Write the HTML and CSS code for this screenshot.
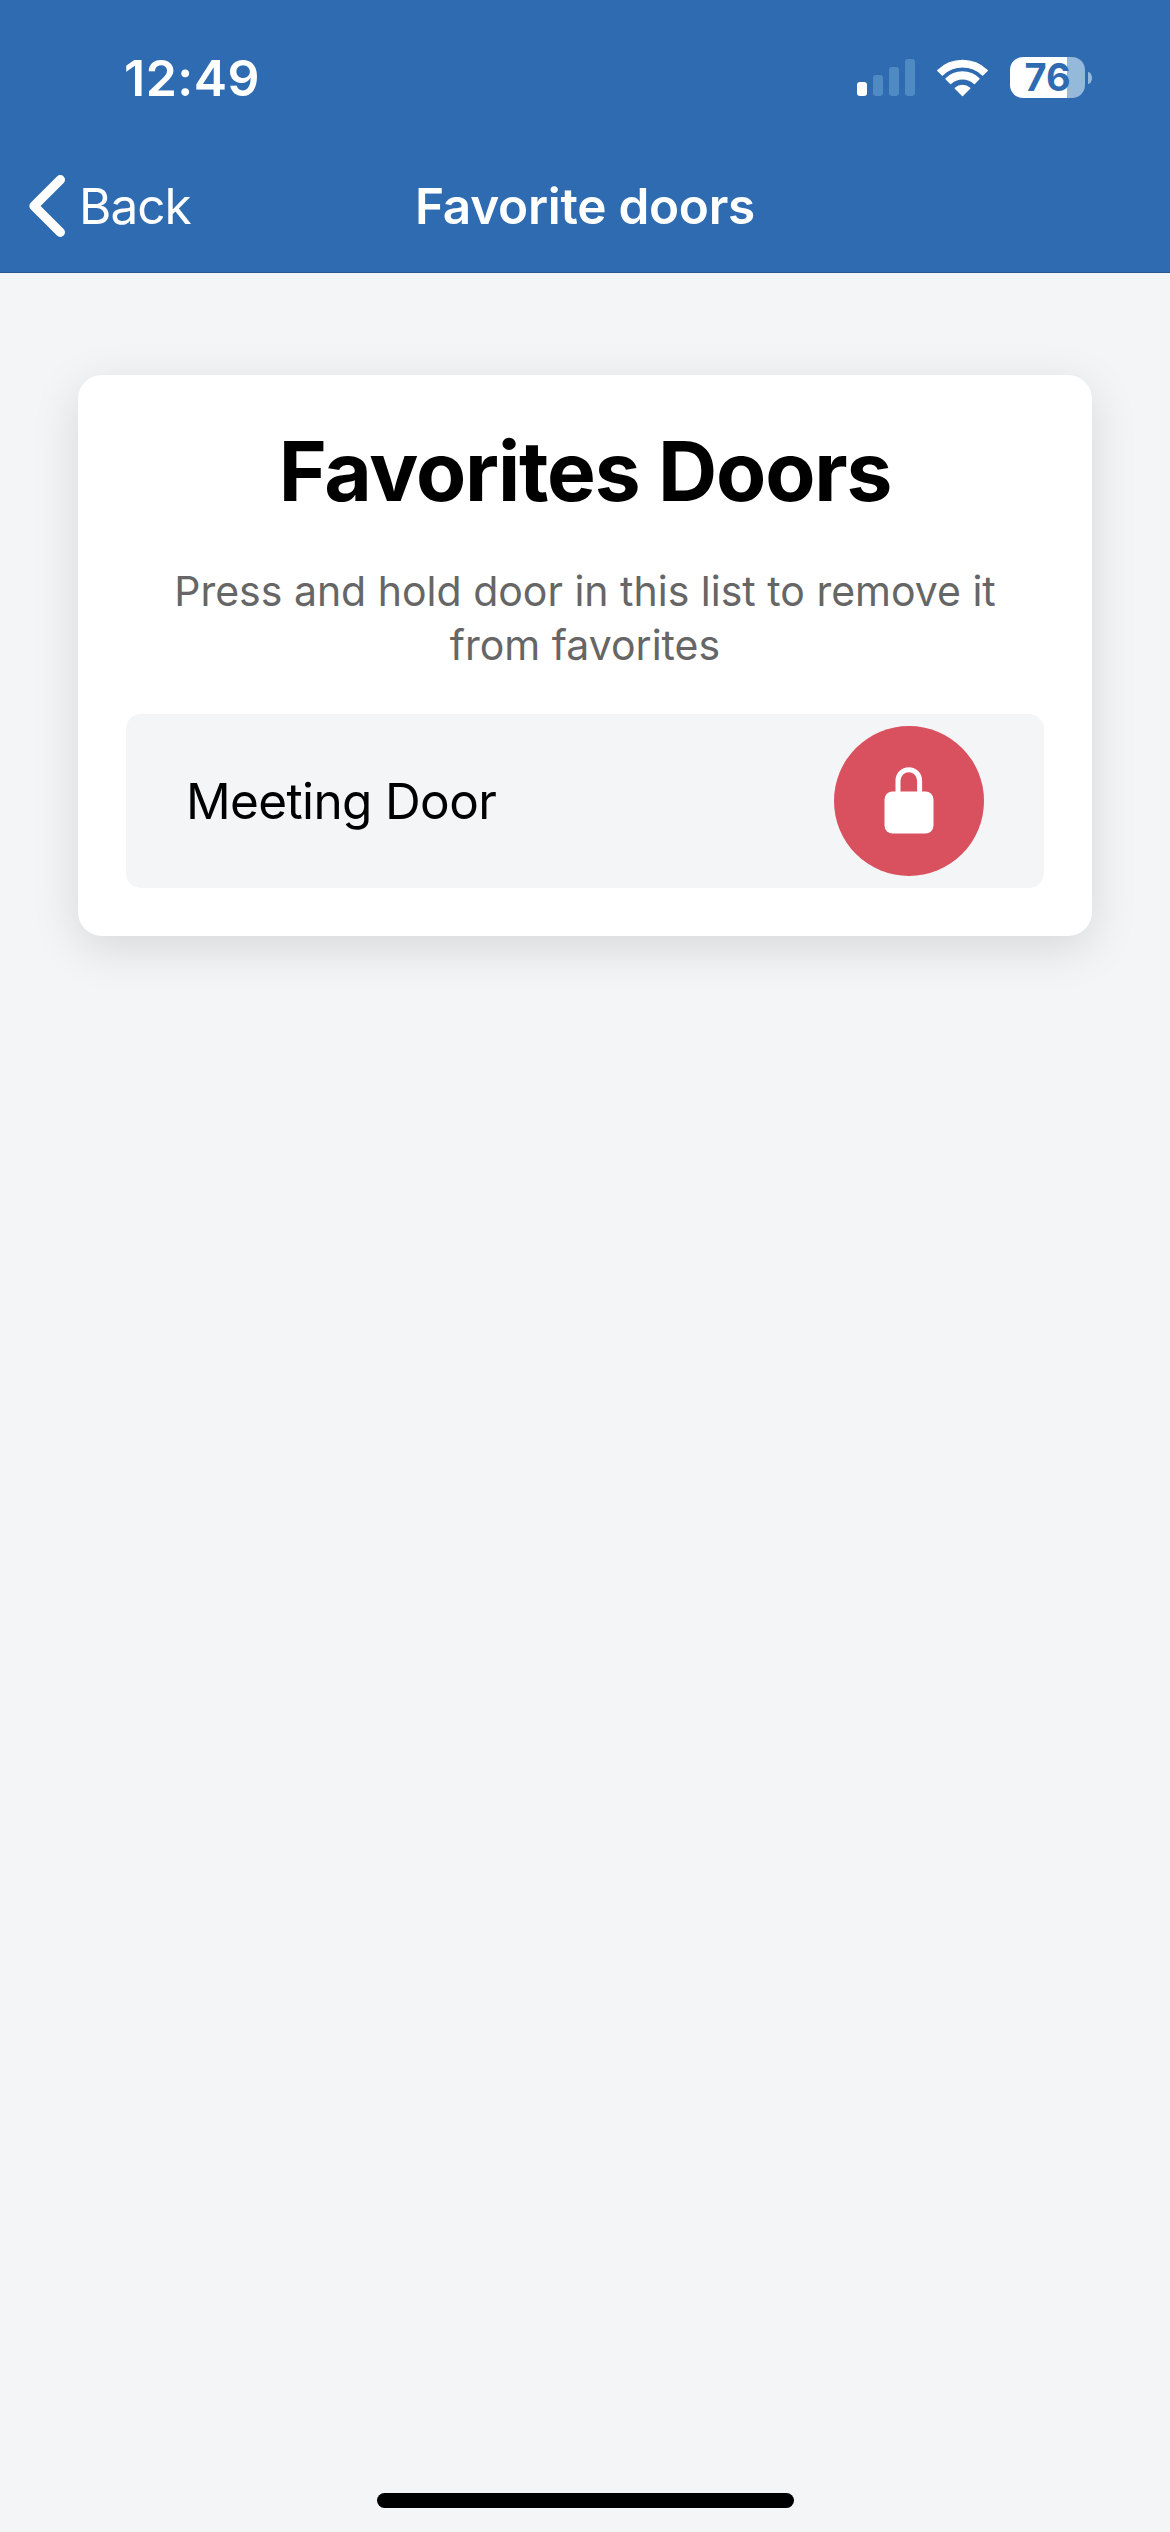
FILE: index.html
```html
<!DOCTYPE html>
<html lang="en">
<head>
    <meta charset="UTF-8">
    <meta name="viewport" content="width=device-width, initial-scale=1.0">
    <title>Favorite doors</title>
    <link rel="stylesheet" href="styles.css">
</head>
<body>
    <div class="header">
        <div class="status-bar">
            <div class="time">12:49</div>
            <div class="status-icons">
                <div class="signal">
                    <span class="bar bar-1 on"></span>
                    <span class="bar bar-2"></span>
                    <span class="bar bar-3"></span>
                    <span class="bar bar-4"></span>
                </div>
                <svg class="wifi" width="51" height="38" viewBox="0 0 51 38">
                    <path d="M0.8 11.4A35.5 35.5 0 0 1 50.2 11.4L45.6 16A29 29 0 0 0 5.4 16Z"/>
                    <path d="M9 19.8A23.5 23.5 0 0 1 42 19.8L37.4 24.6A17 17 0 0 0 13.6 24.6Z"/>
                    <path d="M18.3 29.2A10.6 10.6 0 0 1 32.7 29.2L25.5 36.4Z"/>
                </svg>
                <div class="battery">
                    <div class="battery-body"><span>76</span></div>
                    <div class="battery-tip"></div>
                </div>
            </div>
        </div>
        <div class="navbar">
            <button class="back-button" onclick="goBack()">
                <svg width="36" height="62" viewBox="0 0 36 62">
                    <path d="M31.3 4.7L5 31L31.3 57.3"/>
                </svg>
                <span>Back</span>
            </button>
            <div class="nav-title">Favorite doors</div>
        </div>
    </div>
    <div class="content">
        <div class="card">
            <h1 class="title">Favorites Doors</h1>
            <p class="hint">Press and hold door in this list to remove it from favorites</p>
            <div class="door">
                <div class="door-name">Meeting Door</div>
                <button class="lock-button">
                    <svg width="50" height="67" viewBox="0 0 50 67">
                        <path class="shackle" d="M14 27V13.5A10.8 10.8 0 0 1 35.6 13.5V27"/>
                        <rect x="0.5" y="24.5" width="49" height="42" rx="8"/>
                    </svg>
                </button>
            </div>
        </div>
    </div>
    <div class="home-indicator"></div>

    <script>
        function goBack() {
            window.history.back();
        }
    </script>
</body>
</html>
```

FILE: styles.css
```css
body {
    font-family: Inter, "Liberation Sans", sans-serif;
    margin: 0;
    padding: 0;
    min-height: 2532px;
    display: flex;
    flex-direction: column;
    background-color: #f3f5f7;
}
button {
    font-family: inherit;
    border: none;
    padding: 0;
    cursor: pointer;
}
.header {
    background-color: #2e6bb1;
    color: white;
    border-bottom: 1px solid #2b568c;
}
.status-bar {
    height: 141px;
    padding: 14px 78px 0 124px;
    box-sizing: border-box;
    display: flex;
    justify-content: space-between;
    align-items: center;
}
.time {
    font-size: 50px;
    font-weight: 600;
    letter-spacing: 0.5px;
}
.status-icons {
    display: flex;
    align-items: center;
}
.signal {
    display: flex;
    align-items: flex-end;
    gap: 6px;
    height: 37px;
    margin-right: 22px;
}
.bar {
    width: 10px;
    border-radius: 3px;
    background-color: #4f8ac3;
}
.bar.on {
    background-color: white;
}
.bar-1 {
    height: 14px;
}
.bar-2 {
    height: 21px;
}
.bar-3 {
    height: 29px;
}
.bar-4 {
    height: 37px;
}
.wifi {
    margin-right: 22px;
    fill: white;
    stroke: white;
    stroke-width: 1.4;
    stroke-linejoin: round;
}
.battery {
    display: flex;
    align-items: center;
    gap: 3px;
}
.battery-body {
    width: 75px;
    height: 41px;
    border-radius: 13px;
    background: linear-gradient(to right, white 57px, #94b9db 57px);
    color: #2e6bb1;
    font-size: 38px;
    font-weight: 700;
    line-height: 41px;
    text-align: center;
}
.battery-tip {
    width: 4px;
    height: 12px;
    border-radius: 0 4px 4px 0 / 0 6px 6px 0;
    background-color: #94b9db;
}
.navbar {
    height: 131px;
    padding: 0 29px 2px;
    box-sizing: border-box;
    display: grid;
    grid-template-columns: 1fr auto 1fr;
    align-items: center;
}
.back-button {
    display: flex;
    align-items: center;
    gap: 14px;
    background: none;
    color: white;
    font-size: 49.5px;
    letter-spacing: -1px;
}
.back-button path {
    fill: none;
    stroke: white;
    stroke-width: 9.4;
    stroke-linecap: round;
    stroke-linejoin: round;
}
.nav-title {
    font-size: 49.5px;
    font-weight: 600;
    letter-spacing: -0.27px;
}
.content {
    flex: 1;
    padding: 102px 78px 0;
}
.card {
    padding: 49px 48px 48px;
    border-radius: 24px;
    background-color: white;
    box-shadow: 0 12px 48px rgba(0,0,10,0.12);
}
.title {
    margin: 0 0 44px;
    font-size: 82px;
    font-weight: 700;
    line-height: 96px;
    letter-spacing: -1.13px;
    text-align: center;
}
.hint {
    margin: 0 0 42px;
    padding: 0 40px;
    color: #666;
    font-size: 41px;
    line-height: 54px;
    text-align: center;
}
.door {
    height: 174px;
    padding: 0 60px;
    display: flex;
    justify-content: space-between;
    align-items: center;
    border-radius: 15px;
    background-color: #f3f5f7;
}
.door-name {
    font-size: 49.5px;
    letter-spacing: -0.64px;
}
.lock-button {
    width: 150px;
    height: 150px;
    border-radius: 50%;
    background-color: #d9515f;
}
.lock-button svg {
    display: block;
    margin: -1px auto 0;
    fill: white;
}
.lock-button .shackle {
    fill: none;
    stroke: white;
    stroke-width: 5;
}
.home-indicator {
    width: 417px;
    height: 15px;
    margin: 0 auto 24px;
    border-radius: 8px;
    background-color: black;
}
```
